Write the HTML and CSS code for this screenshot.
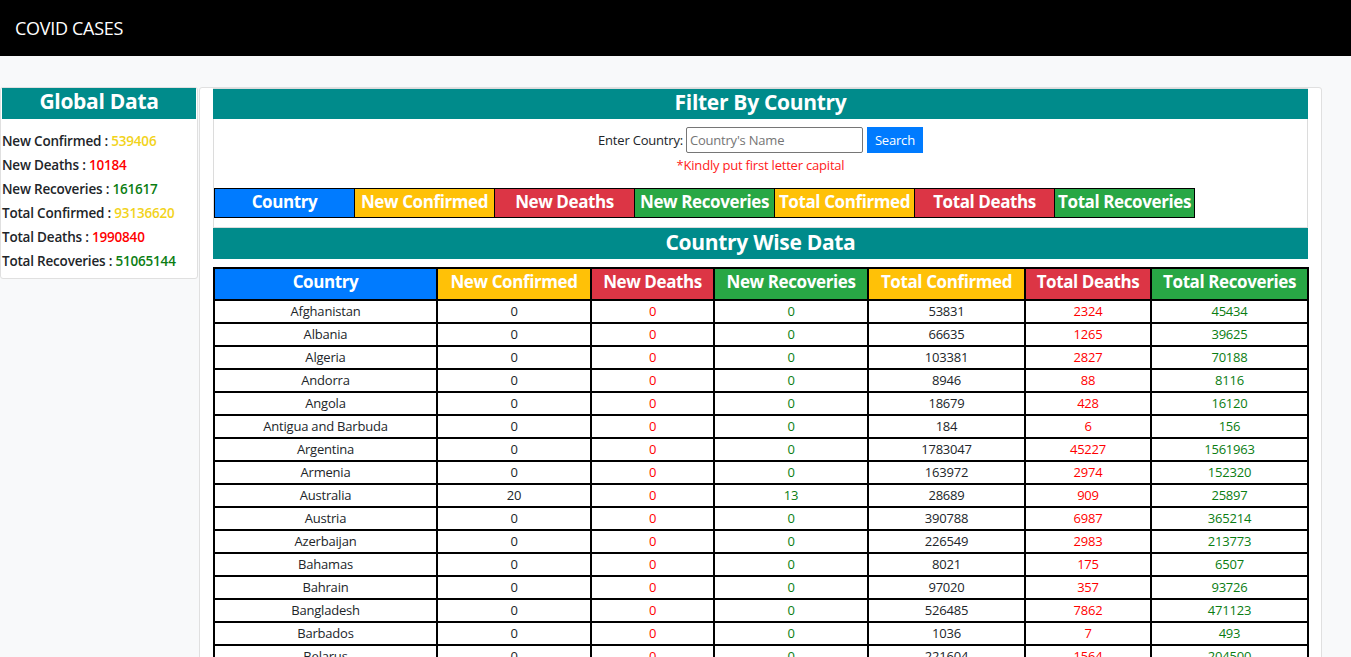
FILE: index.html
```html
<!DOCTYPE html>
<html>
<head>
<meta charset="utf-8">
<title>COVID CASES</title>
<link rel="stylesheet" href="styles.css">
</head>
<body>
<nav class="navbar"><span class="brand">COVID CASES</span></nav>
<main class="page">
  <aside class="global-card">
    <h2 class="teal-head">Global Data</h2>
    <ul class="global-list">
      <li>New Confirmed : <span class="yellow">539406</span></li>
      <li>New Deaths : <span class="red">10184</span></li>
      <li>New Recoveries : <span class="green">161617</span></li>
      <li>Total Confirmed : <span class="yellow">93136620</span></li>
      <li>Total Deaths : <span class="red">1990840</span></li>
      <li>Total Recoveries : <span class="green">51065144</span></li>
    </ul>
  </aside>
  <section class="main-card">
    <div class="filter-box">
      <h2 class="teal-head">Filter By Country</h2>
      <form class="filter-form">
        <label class="filter-label">Enter Country:</label>
        <input class="filter-input" type="text" placeholder="Country's Name">
        <button class="search-btn" type="button">Search</button>
      </form>
      <p class="hint">*Kindly put first letter capital</p>
      <table class="legend">
        <tr>
          <td class="bg-blue">Country</td>
          <td class="bg-yellow">New Confirmed</td>
          <td class="bg-red">New Deaths</td>
          <td class="bg-green">New Recoveries</td>
          <td class="bg-yellow">Total Confirmed</td>
          <td class="bg-red">Total Deaths</td>
          <td class="bg-green">Total Recoveries</td>
        </tr>
      </table>
    </div>
    <h2 class="teal-head wise">Country Wise Data</h2>
    <table class="data">
      <colgroup>
        <col class="c1"><col class="c2"><col class="c3"><col class="c4"><col class="c5"><col class="c6"><col class="c7">
      </colgroup>
      <thead>
        <tr>
          <th class="bg-blue">Country</th>
          <th class="bg-yellow">New Confirmed</th>
          <th class="bg-red">New Deaths</th>
          <th class="bg-green">New Recoveries</th>
          <th class="bg-yellow">Total Confirmed</th>
          <th class="bg-red">Total Deaths</th>
          <th class="bg-green">Total Recoveries</th>
        </tr>
      </thead>
      <tbody>
        <tr><td>Afghanistan</td><td>0</td><td class="red">0</td><td class="green">0</td><td>53831</td><td class="red">2324</td><td class="green">45434</td></tr>
        <tr><td>Albania</td><td>0</td><td class="red">0</td><td class="green">0</td><td>66635</td><td class="red">1265</td><td class="green">39625</td></tr>
        <tr><td>Algeria</td><td>0</td><td class="red">0</td><td class="green">0</td><td>103381</td><td class="red">2827</td><td class="green">70188</td></tr>
        <tr><td>Andorra</td><td>0</td><td class="red">0</td><td class="green">0</td><td>8946</td><td class="red">88</td><td class="green">8116</td></tr>
        <tr><td>Angola</td><td>0</td><td class="red">0</td><td class="green">0</td><td>18679</td><td class="red">428</td><td class="green">16120</td></tr>
        <tr><td>Antigua and Barbuda</td><td>0</td><td class="red">0</td><td class="green">0</td><td>184</td><td class="red">6</td><td class="green">156</td></tr>
        <tr><td>Argentina</td><td>0</td><td class="red">0</td><td class="green">0</td><td>1783047</td><td class="red">45227</td><td class="green">1561963</td></tr>
        <tr><td>Armenia</td><td>0</td><td class="red">0</td><td class="green">0</td><td>163972</td><td class="red">2974</td><td class="green">152320</td></tr>
        <tr><td>Australia</td><td>20</td><td class="red">0</td><td class="green">13</td><td>28689</td><td class="red">909</td><td class="green">25897</td></tr>
        <tr><td>Austria</td><td>0</td><td class="red">0</td><td class="green">0</td><td>390788</td><td class="red">6987</td><td class="green">365214</td></tr>
        <tr><td>Azerbaijan</td><td>0</td><td class="red">0</td><td class="green">0</td><td>226549</td><td class="red">2983</td><td class="green">213773</td></tr>
        <tr><td>Bahamas</td><td>0</td><td class="red">0</td><td class="green">0</td><td>8021</td><td class="red">175</td><td class="green">6507</td></tr>
        <tr><td>Bahrain</td><td>0</td><td class="red">0</td><td class="green">0</td><td>97020</td><td class="red">357</td><td class="green">93726</td></tr>
        <tr><td>Bangladesh</td><td>0</td><td class="red">0</td><td class="green">0</td><td>526485</td><td class="red">7862</td><td class="green">471123</td></tr>
        <tr><td>Barbados</td><td>0</td><td class="red">0</td><td class="green">0</td><td>1036</td><td class="red">7</td><td class="green">493</td></tr>
        <tr><td>Belarus</td><td>0</td><td class="red">0</td><td class="green">0</td><td>221604</td><td class="red">1564</td><td class="green">204500</td></tr>
      </tbody>
    </table>
  </section>
</main>
</body>
</html>
```

FILE: styles.css
```css
* { box-sizing: border-box; }
html, body {
  margin: 0;
  padding: 0;
  background: #f8f9fa;
  font-family: "Open Sans", "Noto Sans", sans-serif;
  font-size: 14px;
  color: #212529;
}
.navbar {
  height: 56px;
  background: #000;
  display: flex;
  align-items: center;
  padding-left: 15px;
}
.brand {
  color: #fff;
  font-size: 18px;
  letter-spacing: -0.3px;
}
.page {
  display: flex;
  align-items: flex-start;
  gap: 1px;
  padding-top: 31px;
}
.teal-head {
  margin: 0;
  background: #008b8b;
  color: #fff;
  text-align: center;
  font-size: 21px;
  font-weight: 700;
  height: 31px;
  line-height: 27px;
  letter-spacing: -0.3px;
}
.global-card {
  width: 198px;
  background: #fff;
  border: 1px solid #e0e0e0;
  border-radius: 3px;
  padding: 0 1px 5px;
}
.global-list {
  list-style: none;
  margin: 10px 0 0;
  padding: 0;
}
.global-list li {
  line-height: 24px;
  font-size: 13.5px;
  font-weight: 600;
  letter-spacing: -0.2px;
  white-space: nowrap;
}
.yellow { color: #f2d31b; }
.red { color: #ff0000; }
.green { color: #0a7d12; }
.main-card {
  width: 1123px;
  background: #fff;
  border: 1px solid #e0e0e0;
  border-radius: 3px;
  padding: 0 13px 0 13px;
}
.filter-box {
  border: 1px solid #dcdcdc;
  padding-bottom: 9px;
}
.filter-box .teal-head {
  margin: 0 -1px;
  height: 30px;
}
.filter-form {
  display: flex;
  justify-content: center;
  align-items: center;
  margin: 7px 0 0;
  height: 27px;
}
.filter-label {
  font-size: 13px;
  margin-right: 3px;
  letter-spacing: -0.2px;
}
.filter-input {
  width: 177px;
  height: 26px;
  border: 1px solid #767676;
  border-radius: 2px;
  padding: 1px 3px;
  font-family: inherit;
  font-size: 13px;
  letter-spacing: -0.2px;
  color: #212529;
}
.filter-input::placeholder { color: #757575; }
.search-btn {
  margin-left: 4px;
  width: 56px;
  height: 26px;
  border: 1px solid #007bff;
  background: #007bff;
  color: #fff;
  font-family: inherit;
  font-size: 13px;
  padding: 0;
  letter-spacing: -0.2px;
}
.hint {
  margin: 4px 0 0;
  text-align: center;
  color: #ff1a1a;
  font-size: 13px;
  line-height: 17px;
  letter-spacing: -0.2px;
}
.legend {
  border-collapse: collapse;
  margin-top: 14px;
  table-layout: fixed;
}
.legend td {
  width: 140px;
  border: 1px solid #000;
  height: 29px;
  padding: 0 0 3px;
  text-align: center;
  color: #fff;
  font-weight: 700;
  font-size: 17px;
  line-height: 24px;
  letter-spacing: -0.4px;
  white-space: nowrap;
}
.bg-blue { background: #007bff; }
.bg-yellow { background: #ffc107; }
.bg-red { background: #dc3545; }
.bg-green { background: #28a745; }
.wise {
  margin-top: 0;
  line-height: 28px;
}
.data {
  margin-top: 8px;
  width: 1094px;
  border-collapse: collapse;
  table-layout: fixed;
}
.c1 { width: 223px; }
.c2 { width: 154px; }
.c3 { width: 123px; }
.c4 { width: 154px; }
.c5 { width: 157px; }
.c6 { width: 126px; }
.c7 { width: 157px; }
.data th {
  border: 2px solid #000;
  height: 32px;
  padding: 0 0 4px;
  color: #fff;
  font-size: 17px;
  font-weight: 700;
  line-height: 24px;
  letter-spacing: -0.4px;
  white-space: nowrap;
}
.data td {
  border: 2px solid #000;
  height: 23px;
  padding: 0;
  text-align: center;
  font-size: 13px;
  line-height: 19px;
  letter-spacing: -0.2px;
}
```
